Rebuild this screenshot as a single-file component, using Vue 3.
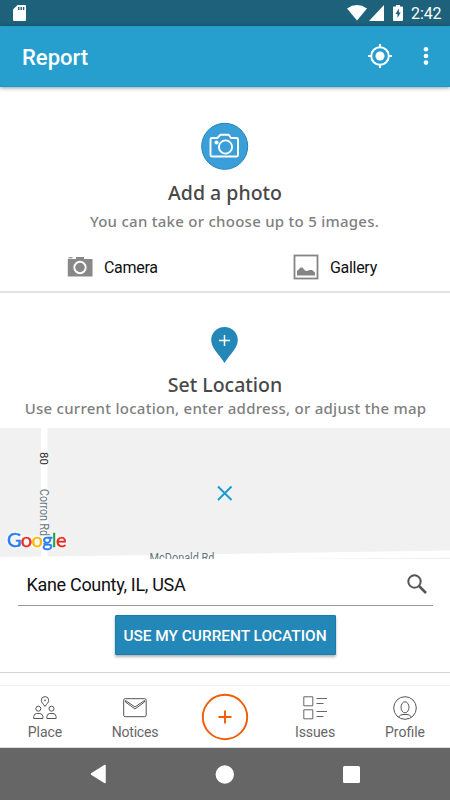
<script setup>
const brand = [
  { ch: 'G', color: '#2a7df4' },
  { ch: 'o', color: '#ee2b22' },
  { ch: 'o', color: '#fbb90a' },
  { ch: 'g', color: '#2a7df4' },
  { ch: 'l', color: '#20a84b' },
  { ch: 'e', color: '#ee2b22' }
]
</script>

<template>
  <div class="screen">
    <div class="status">
      <svg class="sd" width="13" height="16" viewBox="0 0 13 16"><path d="M4.600 0H12a1 1 0 0 1 1 1v14a1 1 0 0 1-1 1H1a1 1 0 0 1-1-1V4.600z" fill="#fff" /><path d="M5.800 2v3M8.200 2v3M10.600 2v3" stroke="#1d617b" stroke-width="1.400" /></svg>
      <div class="signals">
        <svg width="20" height="16" viewBox="0 0 20 16"><path d="M0 3.400Q10-3.200 20 3.400L10 15.400z" fill="#fff" /></svg>
        <svg width="15" height="16" viewBox="0 0 15 16"><path d="M15 0v16H0z" fill="#fff" /></svg>
        <svg class="battery" width="10" height="16" viewBox="0 0 10 16"><path d="M3 0h4v1.500h2a1 1 0 0 1 1 1V15a1 1 0 0 1-1 1H1a1 1 0 0 1-1-1V2.500a1 1 0 0 1 1-1h2z" fill="#fff" /><path d="M5.900 3.500L2.500 9h2v4L7.700 7.600H5.900z" fill="#1d617b" /></svg>
        <span class="clock">2:42</span>
      </div>
    </div>

    <header class="appbar">
      <h1>Report</h1>
      <div class="actions">
        <svg width="24" height="24" viewBox="0 0 24 24" fill="none" stroke="#fff" stroke-width="2"><circle cx="12" cy="12" r="8.800" /><circle cx="12" cy="12" r="4.500" fill="#fff" stroke="none" /><path d="M12 0v4M12 20v4M0 12h4M20 12h4" /></svg>
        <svg width="6" height="20" viewBox="0 0 6 20" fill="#fff"><circle cx="3" cy="3.300" r="2.300" /><circle cx="3" cy="10" r="2.300" /><circle cx="3" cy="16.600" r="2.300" /></svg>
      </div>
    </header>

    <section class="photo">
      <svg class="photo-badge" width="48" height="48" viewBox="0 0 48 48" fill="none">
        <circle cx="23.700" cy="24.300" r="23" fill="#3a9fd8" stroke="#1f86b9" />
        <g stroke="#fff" stroke-width="1.900" stroke-linejoin="round"><path d="M11 16h5.500l2.800-3.200h8.400L30 16h5.500a1.500 1.500 0 0 1 1.500 1.500V33a1.500 1.500 0 0 1-1.500 1.500H11A1.500 1.500 0 0 1 9.500 33V17.500A1.500 1.500 0 0 1 11 16z" /><circle cx="24.500" cy="25" r="6.600" /></g>
        <circle cx="15.500" cy="20.500" r="2" fill="#fff" />
      </svg>
      <h2 class="photo-title">Add a photo</h2>
      <p class="photo-hint">You can take or choose up to 5 images.</p>
      <div class="sources">
        <div class="source">
          <svg width="26" height="26" viewBox="0 0 26 26"><path d="M.8 5H9V3h8v2h8.500v17.500H.8z" fill="#888" /><path d="M1.500 3.700h4" stroke="#888" stroke-width="1.200" /><circle cx="13" cy="13.500" r="5.700" fill="#888" stroke="#fff" stroke-width="1.900" /></svg>
          <span class="camera-label">Camera</span>
        </div>
        <div class="source">
          <svg width="26" height="26" viewBox="0 0 26 26"><rect x="1.500" y="1.500" width="23" height="23" fill="none" stroke="#858585" stroke-width="1.800" /><path d="M4 21.500V17l3.500-3.500h2l2.500 3 2 .5 2.500-1h2.500l3 2.500v3z" fill="#858585" /></svg>
          <span class="gallery-label">Gallery</span>
        </div>
      </div>
    </section>

    <section class="location">
      <svg class="pin" width="27" height="36" viewBox="0 0 27 36"><path d="M13.500 0C6 0 .2 5.800.2 13c0 8.500 8.300 14.500 13.300 23C18.500 27.500 26.800 21.500 26.800 13 26.800 5.800 21 0 13.500 0z" fill="#2387b8" /><path d="M13.500 8v11M8 13.500h11" stroke="#fff" stroke-width="1.500" /></svg>
      <h2 class="location-title">Set Location</h2>
      <p class="location-hint">Use current location, enter address, or adjust the map</p>
      <div class="map">
        <svg width="450" height="131" viewBox="0 0 450 131">
          <path d="M0 0H450V131H0z" fill="#f1f1f1" />
          <path d="M0 129L48 128.500L450 122.500V129.500L270 131H0z" fill="#fff" />
          <path d="M41 0h6.500v131H41z" fill="#fff" />
          <g class="road">
            <text transform="translate(39.500 24) rotate(90)" class="route">80</text>
            <text transform="translate(39.500 61) rotate(90)" textLength="47" lengthAdjust="spacingAndGlyphs">Corron Rd</text>
            <text x="149.500" y="134" textLength="65" lengthAdjust="spacingAndGlyphs">McDonald Rd</text>
          </g>
          <path d="M218 58.500l13.500 13.500M231.500 58.500L218 72" stroke="#169bcd" stroke-width="1.900" />
          <text class="brand" x="7" y="118.500" textLength="59.500"><tspan v-for="(l, i) in brand" :key="i" :fill="l.color" :stroke="l.color">{{ l.ch }}</tspan></text>
        </svg>
      </div>
      <div class="search">
        <span class="address">Kane County, IL, USA</span>
        <svg width="20" height="20" viewBox="0 0 20 20" fill="none" stroke="#555"><circle cx="7.500" cy="7.500" r="6.200" stroke-width="2" /><path d="M12 12l7 7" stroke-width="2.500" /></svg>
      </div>
      <button class="locate">USE MY CURRENT LOCATION</button>
    </section>

    <nav class="tabs">
      <div class="tab">
        <svg width="24" height="24" viewBox="0 0 24 24" fill="none" stroke="#555"><path d="M12 10.500C10.500 8 8.300 6.500 8.300 4.300a3.700 3.700 0 0 1 7.400 0C15.700 6.500 13.500 8 12 10.500z" /><circle cx="12" cy="4.300" r=".5" /><circle cx="5.300" cy="12.700" r="2.500" /><circle cx="18.500" cy="12.700" r="2.500" /><path d="M.7 22.500v-2q.5-3 3-3h3.200q2.500 0 3 3v2zM13.900 22.500v-2q.5-3 3-3h3.200q2.500 0 3 3v2z" /></svg>
        <span class="place">Place</span>
      </div>
      <div class="tab">
        <svg width="24" height="24" viewBox="0 0 24 24" fill="none" stroke="#555"><rect x=".7" y="2.700" width="22.500" height="18" rx="1.500" /><path d="M2.500 4.500V6l9.500 7 9.500-7V4.500L12 11z" /></svg>
        <span class="notices">Notices</span>
      </div>
      <div class="tab add">
        <svg width="48" height="48" viewBox="0 0 48 48" fill="none" stroke="#f25c05" stroke-width="1.900"><circle cx="24" cy="24" r="22.200" /><path d="M24 17.500v13M17.500 24h13" /></svg>
      </div>
      <div class="tab">
        <svg width="24" height="24" viewBox="0 0 24 24" fill="none" stroke="#666"><path d="M.8.800h9v9h-9zM.8 13.800h9v9h-9zM13.500 2.500H24M13.500 7.500h7M13.500 15.500H24M13.500 20.500h7" /></svg>
        <span class="issues">Issues</span>
      </div>
      <div class="tab">
        <svg width="24" height="24" viewBox="0 0 24 24" fill="none" stroke="#555"><circle cx="12" cy="12" r="11.300" /><ellipse cx="12" cy="11.300" rx="4" ry="5.500" /><path d="M5.500 21Q7.500 18.500 10 18.500h4q2.500 0 4.500 2.500" /></svg>
        <span class="profile">Profile</span>
      </div>
    </nav>

    <footer class="system">
      <svg width="16" height="20" viewBox="0 0 16 20"><path d="M15 1.500v17L1.500 10z" fill="#fff" stroke="#fff" stroke-width="1.500" stroke-linejoin="round" /></svg>
      <svg width="19" height="19" viewBox="0 0 19 19"><circle cx="9.800" cy="9.500" r="9.200" fill="#fff" /></svg>
      <svg width="17" height="17" viewBox="0 0 17 17"><rect width="17" height="17" rx="1.500" fill="#fff" /></svg>
    </footer>
  </div>
</template>

<style>
body { margin: 0; background: #fff; }
</style>

<style scoped>
.screen { width: 450px; height: 800px; display: flex; flex-direction: column; overflow: hidden; background: #fff; font-family: Roboto, sans-serif; color: #111; }
svg { display: block; flex: none; }
h1, h2, p { margin: 0; white-space: nowrap; }
.status { flex: none; height: 26px; box-sizing: border-box; padding: 0 9px 0 13px; display: flex; align-items: center; justify-content: space-between; background: #1d617b; }
.signals { display: flex; align-items: center; }
.signals svg + svg { margin-left: 2px; }
.signals .battery { margin-left: 9px; }
.clock { width: 30px; margin-left: 8px; font-size: 16px; line-height: 26px; color: #fff; padding-top: 2px; letter-spacing: -.1px; }
.appbar { flex: none; height: 61px; box-sizing: border-box; padding: 0 21px 0 22px; display: flex; align-items: center; justify-content: space-between; background: #269fce; border-bottom: 1px solid #159bd0; box-shadow: 0 1px 4px rgba(0, 0, 0, .4); z-index: 1; }
.appbar h1 { font-size: 22px; line-height: 30px; font-weight: 500; color: #fff; padding-top: 4px; }
.actions { display: flex; align-items: center; gap: 31px; }
.photo { flex: none; height: 206px; box-sizing: border-box; padding-top: 35px; display: flex; flex-direction: column; align-items: center; border-bottom: 2px solid #e2e2e2; }
h2 { font: 500 19.500px/28px "Noto Sans", sans-serif; color: #484848; }
p { font: 500 15px/20px "Noto Sans", sans-serif; letter-spacing: .26px; color: #808080; }
.photo-title { margin-top: 9px; }
.photo-hint { margin: 4px 0 0 19px; }
.sources { width: 450px; box-sizing: border-box; margin-top: 23px; padding-left: 67px; display: grid; grid-template-columns: 226px 1fr; }
.source { display: flex; align-items: center; gap: 11px; font-size: 16px; line-height: 26px; letter-spacing: -.3px; }
.source span { padding-top: 1px; line-height: 25px; }
.location { flex: none; height: 380px; box-sizing: border-box; padding-top: 34px; display: flex; flex-direction: column; align-items: center; border-bottom: 1px solid #d4d4d4; }
.pin { margin-right: 1px; }
.location-title { margin-top: 8px; }
.location-hint { margin-top: -1px; padding-left: 1px; }
.map { height: 131px; margin-top: 10px; overflow: hidden; }
.road { font: 12px Roboto, sans-serif; fill: #65747b; }
.route { font-size: 11.500px; fill: #222; }
.brand { font: 400 20px Lato, sans-serif; stroke-width: .5px; filter: drop-shadow(0 0 1px #fff) drop-shadow(0 0 1px #fff); }
.search { width: 415px; height: 47px; box-sizing: border-box; padding: 3px 6px 0 9px; display: flex; align-items: center; justify-content: space-between; border-bottom: 1px solid #999; font-size: 18px; letter-spacing: -.31px; }
.address { padding-top: 1px; }
.locate { width: 221px; height: 40px; margin: 9px 0 0; padding: 1px 0 0; border: 1px solid #157db2; border-radius: 1px; background: #2387b8; color: #fff; font: 500 15.400px/38px Roboto, sans-serif; white-space: nowrap; box-shadow: 0 2px 3px rgba(0, 0, 0, .3); }
.tabs { flex: none; height: 63px; margin-top: 12px; box-sizing: border-box; display: grid; grid-template-columns: repeat(5, 90px); border-top: 1px solid #f1f1f1; border-bottom: 1px solid #ddd; }
.tab { display: flex; flex-direction: column; align-items: center; padding-top: 10px; font-size: 14px; line-height: 18px; color: #666; }
.tab span { margin-top: 3px; }
.notices { letter-spacing: -.2px; }
.issues { letter-spacing: -.1px; }
.tab.add { padding-top: 7px; }
.system { flex: none; height: 52px; box-sizing: border-box; padding: 0 90px; display: flex; align-items: center; justify-content: space-between; background: #666; }
</style>
